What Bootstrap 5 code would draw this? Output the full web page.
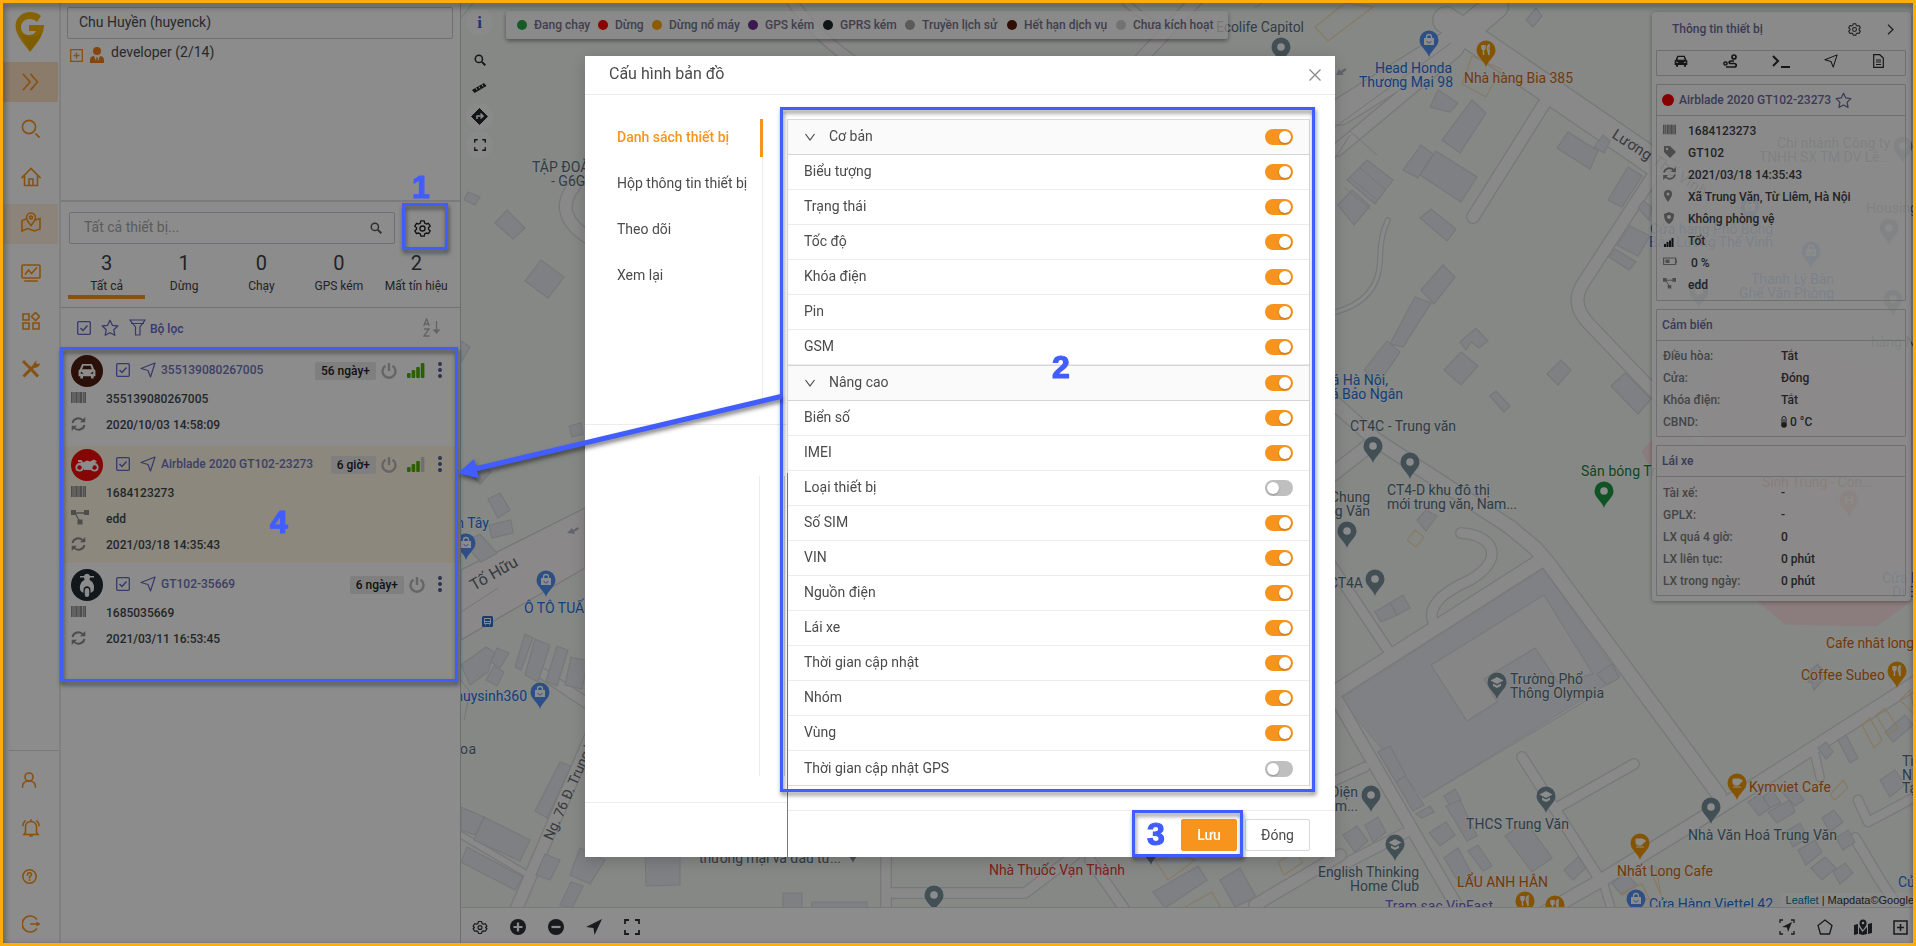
<!DOCTYPE html>
<html lang="vi">
<head>
<meta charset="utf-8">
<title>Cấu hình bản đồ</title>
<link href="https://cdn.jsdelivr.net/npm/bootstrap@5.3.0/dist/css/bootstrap.min.css" rel="stylesheet">
<style>
:root{--or:#f7941d;--ind:#6468c4;--mark-blue:#415dff}
body{font-family:Roboto,"Noto Sans",sans-serif;font-size:14px;color:#3c4247;height:946px;overflow:hidden;padding:3px;line-height:1.4}
svg{display:block;flex:none}
.ic{fill:none;stroke:currentColor;stroke-width:1.6;stroke-linecap:square}
.rail{width:58px;border-right:2px solid #e9e9e9;color:var(--or);flex:none}
.rail .cell{height:40px;margin-bottom:8px;width:55px;padding-left:1px}
.rail .up{padding-bottom:3px}
.rail .low{border-top:1px solid #dadada;margin-left:6px;padding-top:10px}
.rail .low .cell{margin-left:-6px;padding-bottom:2px}
.side{width:400px;border-right:1px solid #c8c8c8;flex:none}
.userbox{margin:4px 7px 0 6px;height:32px;border:1px solid #c9ccd1;border-radius:2px;padding:0 11px;color:#4a4d50}
.tree{height:163px;border-bottom:2px solid #e0e0e0;padding:4px 0 0 9px}
.find{width:326px;height:32px;border:1px solid #c9ccd6;border-radius:2px;color:#a6a8ab;padding:0 12px 0 14px}
.stat{width:77.4px;height:49px;font-size:12px;line-height:17px;white-space:nowrap}
.stat b{display:block;font-size:20px;font-weight:400;line-height:26px;height:28px}
.stat.on{border-bottom:4px solid var(--or)}
.tools{height:45px;border-top:1px solid #cfcfcf;color:var(--ind);padding:0 19px 5px 16px}
.dev{padding:3px 18px 5px 10px;margin-bottom:3px;font-size:12px;font-weight:500;color:#41474c}
.dev.sel{background:#fff7e6}
.dev .hd{height:31px;color:#6f73b9}
.dev .ava{width:32px;height:32px;border-radius:50%}
.dev .ln{height:26px}
.dev .ln svg{margin-right:20px;color:#8c8c8c}
.age{background:#e8e8e8;color:#222;border-radius:2px;height:18px;padding:0 6px;line-height:18px}
.mapzone{position:relative;overflow:hidden;background:#f4f8f5}
.mapzone>svg{position:absolute;left:0;top:0}
.ctl{position:absolute;left:5px;top:6px;color:#23272b}
.ctl div{width:27px;height:27px;border-radius:50%;background:#f9fbfa}
.legend{position:absolute;left:45px;top:8px;height:28px;width:722px;background:rgba(253,253,253,.75);border-radius:3px;box-shadow:0 2px 4px rgba(0,0,0,.4);font-size:12px;font-weight:500;color:#77728c;white-space:nowrap}
.legend i{width:10px;height:10px;border-radius:50%;flex:none}
.info{position:absolute;left:1191px;top:9px;width:259px;height:589px;background:rgba(253,253,253,.87);border-radius:4px;box-shadow:0 1px 4px rgba(0,0,0,.35);padding:0 5px 0 4px;font-size:12px;font-weight:500;color:#3c4146;white-space:nowrap}
.info .bx{border:1px solid #c8cccc;border-radius:1px}
.info .ti{color:#6a6b9f}
.info .hd2{height:31px;border-bottom:1px solid #c8cccc;padding-left:5px;color:#6a6b9f}
.info .rr{height:22px;padding-left:6px}
.info .rr svg{margin-right:11px;color:#8a8a8a}
.info .rr em{font-style:normal;color:#7d7f80;width:118px}
.credit{position:absolute;right:-6px;bottom:0;background:rgba(255,255,255,.6);font:11px/14px "Liberation Sans",Arial,sans-serif;padding:0 5px;color:#333}
.credit a{color:#0078a8;text-decoration:none}
.foot{height:36px;background:#fff;border-top:1px solid #ddd;color:#2c3136;padding:3px 5px 0 8px;z-index:1}
.dim{position:fixed;inset:0;background:rgba(0,0,0,.45);z-index:10}
.dlg{position:absolute;left:585px;top:56px;width:750px;height:801px;background:#fff;z-index:20;box-shadow:0 4px 14px rgba(0,0,0,.18);color:#4b4b4b}
.dlg header{height:39px;border-bottom:1px solid #ececec;padding:0 14px 1px 24px;font-size:16px}
.tabs4{width:178px;height:280px;border-right:1px solid #ececec;margin-top:24px}
.tabs4 div{height:38px;margin-bottom:8px;padding-left:32px;white-space:nowrap}
.tabs4 div.on{color:var(--or);border-right:3px solid var(--or);margin-right:-1px;font-weight:500}
.opts{width:523px;margin:24px 0 0 24px;border:1px solid #d9d9d9;flex:none;height:667px}
.opts .it{height:35px;border-bottom:1px solid #ececec;padding:0 16px}
.opts .it.grp{background:#fafafa;border-bottom-color:#d5d5d5}
.opts .it:last-child{border-bottom:0}
.tg{width:28px;height:16px;border-radius:8px;background:var(--or);padding:2px;display:flex;justify-content:flex-end}
.tg:after{content:"";width:12px;height:12px;border-radius:50%;background:#fff;box-shadow:0 1px 2px rgba(0,0,0,.25)}
.tg.off{background:#bfbfbf;justify-content:flex-start}
.dlg footer{position:absolute;left:203px;right:0;bottom:0;height:47px;border-top:1px solid #ececec;padding:8px 25px 0 0}
.dlg .btn{height:32px;border-radius:2px;font-size:14px;line-height:16px}
.save{background:var(--or)!important;color:#fff!important;border-color:var(--or)!important;font-weight:500;width:56px;margin-right:8px}
.shut{border-color:#d9d9d9!important;color:#4b4b4b!important;width:65px;padding:6px 0}
.seam{position:absolute;background:#ececec}
.callout{position:absolute;border:3px solid var(--mark-blue);z-index:30;filter:drop-shadow(1px 3px 2px rgba(0,0,0,.5))}
.num{position:absolute;z-index:31;font:bold 32px/32px "Liberation Sans",Arial,sans-serif;color:var(--mark-blue);-webkit-text-stroke:1.2px var(--mark-blue)}
.frame{position:fixed;inset:0;border:3px solid #fbae0a;z-index:40;filter:drop-shadow(1px 3px 3px rgba(0,0,0,.6));pointer-events:none}
</style>
</head>
<body>
<svg width="0" height="0" class="position-absolute"><defs>
<symbol id="gear" viewBox="0 0 20 20"><path class="ic" d="M8 2h4l.7 2.500 2 1.100 2.500-.6 2 3.400-1.800 1.600 1.800 1.600-2 3.400-2.500-.6-2 1.100L12 18H8l-.7-2.500-2-1.100-2.500.6-2-3.400L2.600 10 .8 8.400l2-3.400 2.500.6 2-1.100z" stroke-linejoin="round"/><circle class="ic" cx="10" cy="10" r="2.600"/></symbol>
<symbol id="cog" viewBox="0 0 20 20"><path class="ic" d="M8 1h4l.6 2.700 1.800 1 2.600-.8 2 3.400L17 9v2l2 1.700-2 3.400-2.600-.8-1.800 1L12 19H8l-.6-2.700-1.800-1-2.600.8-2-3.400L3 11V9L1 7.300l2-3.400 2.600.8 1.800-1z" stroke-linejoin="round"/><circle class="ic" cx="10" cy="10" r="3"/></symbol>
<symbol id="mag" viewBox="0 0 16 16"><circle cx="6.500" cy="6.500" r="4.800" fill="none" stroke="currentColor" stroke-width="2"/><path d="M10.500 10.500 15 15" stroke="currentColor" stroke-width="2.600"/></symbol>
<symbol id="chk" viewBox="0 0 14 14"><rect x=".7" y=".7" width="12.600" height="12.600" rx="1" fill="none" stroke="currentColor" stroke-width="1.300"/><path d="M3.500 7 6 9.500 10.500 4.500" fill="none" stroke="currentColor" stroke-width="1.500"/></symbol>
<symbol id="nav" viewBox="0 0 16 16"><path d="M15 1 10.500 15 8 8.500 1 6.500z" fill="none" stroke="currentColor" stroke-width="1.200" stroke-linejoin="round"/></symbol>
<symbol id="navf" viewBox="0 0 16 16"><path d="M16 0 8.500 16 7.500 9 0 8z" fill="currentColor"/></symbol>
<symbol id="bar" viewBox="0 0 15 11"><path d="M0 0h1.500v11H0zM2.500 0h1v11h-1zM4.500 0h2v11h-2zM7.500 0h1v11h-1zM9 0h2v11H9zM12 0h.8v11H12zM13.500 0H15v11h-1.500z" fill="currentColor"/><path d="M0 0h15v11H0z" fill="currentColor" opacity=".35"/></symbol>
<symbol id="syn" viewBox="0 0 14 14"><path d="M1 6a6 6 0 0 1 10.500-2.500M13 8A6 6 0 0 1 2.500 10.500" fill="none" stroke="currentColor" stroke-width="1.900"/><path d="M13.800 0v5.300H8.500zM.2 14V8.700h5.300z" fill="currentColor"/></symbol>
<symbol id="net" viewBox="0 0 18 15"><path d="M3 3h12M4 3l5 9" stroke="currentColor" stroke-width="1.300"/><path d="M0 0h5v5H0zM13 0h5v5h-5zM6.500 9.500h5v5h-5z" fill="currentColor"/></symbol>
<symbol id="pow" viewBox="0 0 16 16"><path d="M4.500 2.800a6.500 6.500 0 1 0 7 0M8 0v8" fill="none" stroke="currentColor" stroke-width="2.400"/></symbol>
<symbol id="star" viewBox="0 0 18 18"><path d="m9 1.300 2.400 5 5.400.7-4 3.800 1 5.500L9 13.700l-4.800 2.600 1-5.500-4-3.800 5.400-.7z" fill="none" stroke="currentColor" stroke-width="1.300" stroke-linejoin="round"/></symbol>
<symbol id="exp" viewBox="0 0 16 16"><path d="M1 5V1h4M11 1h4v4M15 11v4h-4M5 15H1v-4" fill="none" stroke="currentColor" stroke-width="1.800"/></symbol>
<symbol id="car" viewBox="0 0 20 18"><path fill-rule="evenodd" d="M4.500 1h11L18 7l1.500 1.500V15H17.500v2.500h-3V15h-9v2.500h-3V15H.5V8.500L2 7zM6 3 4.500 7h11L14 3zM3 9.500v2.500h3.500zM17 9.500v2.500h-3.500z" fill="currentColor"/></symbol>
<symbol id="chev" viewBox="0 0 10 8"><path d="M.5 1 5 7 9.500 1" fill="none" stroke="currentColor" stroke-width="1.200"/></symbol>
</defs></svg>

<div class="d-flex h-100">
 <nav class="rail d-flex flex-column">
  <div style="height:59px" class="ps-2 pt-1"><svg width="40" height="54" viewBox="0 0 40 54"><path d="M19 5C10 5 4.500 12 4.500 19c0 9 8 17 14.500 26 7-9 14-17 14-27H18v6h7c-1.500 3-4 4-7 4-5 0-8-3.500-8-8s4-8 8-8c4 0 6 1 8 3l4-6c-3-3-7-4-11-4z" fill="#f3b600"/><path d="M11 27c5 4 12 4 20-1-2 6-7 12-12 18-4-6-7-11-8-17z" fill="#e3aa00"/></svg></div>
  <div class="cell d-flex align-items-center justify-content-center" style="background:#fde0c4"><svg width="18" height="18" viewBox="0 0 18 18"><path class="ic" d="M1.500 1.500 8 9l-6.500 7.500M9 1.500 15.500 9 9 16.500"/></svg></div>
  <div class="cell up d-flex align-items-center justify-content-center"><svg width="20" height="20" viewBox="0 0 20 20"><circle class="ic" cx="8" cy="8" r="6.600" stroke-width="2"/><path class="ic" d="m15 15 3 3" stroke-width="2.400"/></svg></div>
  <div class="cell up d-flex align-items-center justify-content-center"><svg width="20" height="20" viewBox="0 0 20 20"><path class="ic" d="M1 10.500 10 1.500l9 9M3.500 9v9.500h13V9M8 18v-6h4v6" stroke-width="1.400"/></svg></div>
  <div class="cell d-flex align-items-center justify-content-center pb-1" style="background:#fff1de;position:relative;top:-2px"><svg width="20" height="20" viewBox="0 0 20 20"><path class="ic" d="M5 7 1 8.500V19l5.500-2.500 7 2.500L19 17V6.500l-4 1.300M10 13.500C7 10 5.500 8 5.500 5.500a4.500 4.500 0 0 1 9 0C14.500 8 13 10 10 13.500z" stroke-width="1.300"/><circle class="ic" cx="10" cy="5.500" r="1.500" stroke-width="1.200"/></svg></div>
  <div class="cell up d-flex align-items-center justify-content-center"><svg width="20" height="18" viewBox="0 0 20 18"><rect class="ic" x="1" y="1" width="18" height="13" rx="1" stroke-width="1.400"/><path class="ic" d="m4.500 10 3-4 3 3.500 5-5.500M4 17h12" stroke-width="1.300"/></svg></div>
  <div class="cell up d-flex align-items-center justify-content-center"><svg width="18" height="18" viewBox="0 0 18 18"><path class="ic" d="M1 2h6v6H1zM1 11h6v6H1zM11 11h6v6h-6zM13.500 0.500 17.500 4.500 13.500 8.500 9.500 4.500z" stroke-width="1.400"/></svg></div>
  <div class="cell up d-flex align-items-center justify-content-center"><svg width="20" height="20" viewBox="0 0 20 20"><path d="M2.500 17.500 13 7M7 7l10 10.500" stroke="currentColor" stroke-width="3"/><path d="M1 3l2-2 5 5-2 2zM12 5.500 15.500 1l-.5 3.500 3.500.5L19 3c1 3-3 7-6.500 5.500z" fill="currentColor"/></svg></div>
  <div class="low mt-auto" style="height:193px">
   <div class="cell d-flex align-items-center justify-content-center pe-1"><svg width="16" height="16" viewBox="0 0 16 16"><circle class="ic" cx="8" cy="5" r="4" stroke-width="1.500"/><path class="ic" d="M1.500 15c0-4 2.500-6 6.500-6s6.500 2 6.500 6" stroke-width="1.500"/></svg></div>
   <div class="cell d-flex align-items-center justify-content-center"><svg width="18" height="18" viewBox="0 0 18 18"><path class="ic" d="M2 15.500h14l-1.500-2V8c0-3-2-5.500-5.500-5.500S3.500 5 3.500 8v5.500zM1 6.500C1 4 2 3 3 2M17 6.500C17 4 16 3 15 2M9 1v1M8 17h2" stroke-width="1.100"/></svg></div>
   <div class="cell d-flex align-items-center justify-content-center pe-1"><svg width="15" height="15" viewBox="0 0 15 15"><circle class="ic" cx="7.500" cy="7.500" r="6.700" stroke-width="1.300"/><path class="ic" d="M5.500 6c0-3 4-3 4-.3 0 1.500-2 1.500-2 3M7.500 11v.2" stroke-width="1.200"/></svg></div>
   <div class="cell d-flex align-items-center justify-content-center"><svg width="18" height="18" viewBox="0 0 18 18"><path class="ic" d="M14.500 4a8 8 0 1 0 0 10M9 9h8" stroke-width="1.500"/><path d="M14.500 6.300 18 9l-3.500 2.700z" fill="currentColor"/></svg></div>
  </div>
 </nav>

 <section class="side">
  <div class="userbox d-flex align-items-center">Chu Huyền (huyenck)</div>
  <div class="tree"><div class="d-flex align-items-center" style="color:#4a4d50"><svg width="13" height="13" viewBox="0 0 13 13" class="mt-1"><path d="M.7.700h11.600v11.600H.7zM3.500 6.500h6M6.500 3.500v6" fill="none" stroke="#f7941d" stroke-width="1.300"/></svg>
   <svg width="14" height="16" viewBox="0 0 14 16" class="mt-1" style="margin:0 7px"><circle cx="7" cy="4" r="4" fill="#f0801a"/><path d="M0 16v-3c0-3 2-4 4-4l2 5 .5-4h1l.5 4 2-5c2 0 4 1 4 4v3z" fill="#f0801a"/></svg>developer (2/14)</div></div>
  <div class="d-flex align-items-center" style="padding:10px 0 0 8px">
   <div class="find d-flex align-items-center justify-content-between">Tất cả thiết bị...<svg width="12" height="12" style="color:#555"><use href="#mag"/></svg></div>
   <svg width="17" height="17" style="color:#222;margin-left:19px"><use href="#cog"/></svg>
  </div>
  <div class="d-flex text-center" style="padding:6px 0 8px 7px">
   <div class="stat on"><b>3</b>Tất cả</div><div class="stat"><b>1</b>Dừng</div><div class="stat"><b>0</b>Chạy</div><div class="stat"><b>0</b>GPS kém</div><div class="stat"><b>2</b>Mất tín hiệu</div>
  </div>
  <div class="tools d-flex align-items-center"><svg width="14" height="14"><use href="#chk"/></svg><svg width="18" height="18" style="margin-left:10px"><use href="#star"/></svg><svg width="17" height="17" viewBox="0 0 17 17" style="margin-left:10px"><path d="M1 1h15l-5 7v8H6.500V8zM2 4.500h13" fill="none" stroke="currentColor" stroke-width="1.200"/></svg><span style="font-size:12px;font-weight:500;margin:4px 0 0 4px">Bộ lọc</span>
   <svg class="ms-auto" width="18" height="19" viewBox="0 0 18 19"><path d="M.7 8 3.500.8 6.300 8M1.500 6h4M1 11h5L1 18h5.500M13.500 3v12" fill="none" stroke="#b5b5b5" stroke-width="1.300"/><path d="M9.500 11.500h8l-4 4.500z" fill="#b5b5b5"/></svg></div>
  <div id="devices"></div>
 </section>

 <main class="flex-grow-1 d-flex flex-column" style="min-width:0">
  <div class="mapzone flex-grow-1">
   <svg id="map" width="1452" height="905" viewBox="461 3 1452 905" font-family="Roboto,Noto Sans,sans-serif" font-size="14"></svg>
   <div class="ctl"><div class="d-flex align-items-center justify-content-center" style="color:#4e52d8;font:bold 17px 'Liberation Serif','DejaVu Serif',serif">i</div>
    <div class="d-flex align-items-center justify-content-center" style="margin-top:10px;background:none"><svg width="12" height="12"><use href="#mag"/></svg></div>
    <div class="d-flex align-items-center justify-content-center" style="margin-top:1px;background:none"><svg width="15" height="12" viewBox="0 0 15 12"><path d="m0 8 12-7 2.500 3-12 7z" fill="currentColor"/><path d="m4 6 1 2M7 4.500l1 2M10 2.500l1 2" stroke="#f4f8f5"/></svg></div>
    <div class="d-flex align-items-center justify-content-center" style="margin-top:2px"><svg width="17" height="17" viewBox="0 0 17 17"><path d="m8.500.5 8 8-8 8-8-8z" fill="currentColor" stroke="currentColor" stroke-linejoin="round"/><path d="M6 11V8h5M9.500 5.500 12 8l-2.500 2.500" fill="none" stroke="#fff" stroke-width="1.500"/></svg></div>
    <div class="d-flex align-items-center justify-content-center" style="margin-top:1px"><svg width="12" height="12"><use href="#exp"/></svg></div></div>
   <div class="legend" id="legend"></div>
   <aside class="info">
    <div class="d-flex align-items-center ti" style="height:34px;padding:0 12px 0 16px">Thông tin thiết bị<svg class="ms-auto" width="13" height="13" style="color:#333"><use href="#cog"/></svg><svg width="7" height="11" viewBox="0 0 7 11" style="margin-left:26px"><path d="m1 .8 5 4.700-5 4.700" fill="none" stroke="#333" stroke-width="1.200"/></svg></div>
    <div class="bx d-flex justify-content-around align-items-center pb-1 pe-1" style="height:26px;margin-top:4px;color:#26292c">
     <svg width="14" height="12"><use href="#car"/></svg>
     <svg width="15" height="14" viewBox="0 0 15 14"><circle cx="11" cy="3" r="2" fill="none" stroke="currentColor" stroke-width="1.700"/><circle cx="2.500" cy="9.500" r="1.600" fill="none" stroke="currentColor" stroke-width="1.500"/><path d="M11 7H8c-2.500 0-2.500 2.500 0 2.500h3c3 0 3 3.500 0 3.500H3" fill="none" stroke="currentColor" stroke-width="1.700"/></svg>
     <svg width="18" height="13" viewBox="0 0 18 13"><path d="m1 1 5 5-5 5M9 12h9" fill="none" stroke="currentColor" stroke-width="2"/></svg>
     <svg width="14" height="14"><use href="#nav"/></svg>
     <svg width="11" height="14" viewBox="0 0 11 14"><path d="M.7.700h6L10.300 4v9.300H.7zM3 6h5M3 8h5M3 10.500h5" fill="none" stroke="currentColor" stroke-width="1.200"/></svg></div>
    <div class="bx" style="height:217px;margin-top:8px"><div class="hd2 d-flex align-items-center" style="margin-bottom:4px"><i style="width:12px;height:12px;border-radius:50%;background:#f50000;margin-right:5px"></i>Airblade 2020 GT102-23273<svg width="17" height="17" style="margin-left:4px"><use href="#star"/></svg></div><div id="facts"></div></div>
    <div class="bx" style="height:128px;margin-top:8px"><div class="hd2 d-flex align-items-center" style="margin-bottom:4px">Cảm biến</div>
     <div class="rr d-flex align-items-center"><em>Điều hòa:</em>Tắt</div><div class="rr d-flex align-items-center"><em>Cửa:</em>Đóng</div><div class="rr d-flex align-items-center"><em>Khóa điện:</em>Tắt</div><div class="rr d-flex align-items-center"><em>CBND:</em><svg width="6" height="12" viewBox="0 0 6 12" style="margin-right:3px"><rect x="1" y=".5" width="4" height="9" rx="2" fill="#fff" stroke="#333"/><circle cx="3" cy="9" r="2.800" fill="#333"/><path d="M3 3v6" stroke="#333"/></svg>0 °C</div></div>
    <div class="bx" style="height:151px;margin-top:8px"><div class="hd2 d-flex align-items-center" style="margin-bottom:5px">Lái xe</div>
     <div class="rr d-flex align-items-center"><em>Tài xế:</em>-</div><div class="rr d-flex align-items-center"><em>GPLX:</em>-</div><div class="rr d-flex align-items-center"><em>LX quá 4 giờ:</em>0</div><div class="rr d-flex align-items-center"><em>LX liên tục:</em>0 phút</div><div class="rr d-flex align-items-center"><em>LX trong ngày:</em>0 phút</div></div>
   </aside>
   <div class="credit"><a href="#">Leaflet</a> | Mapdata©Google</div>
  </div>
  <div class="foot d-flex align-items-center">
   <svg width="22" height="15"><use href="#gear" width="22"/></svg>
   <svg width="16" height="16" viewBox="0 0 16 16" style="margin-left:19px"><circle cx="8" cy="8" r="8" fill="currentColor"/><path d="M8 3.500v9M3.500 8h9" stroke="#fff" stroke-width="2.200"/></svg>
   <svg width="16" height="16" viewBox="0 0 16 16" style="margin-left:22px"><circle cx="8" cy="8" r="8" fill="currentColor"/><path d="M3.500 8h9" stroke="#fff" stroke-width="2.200"/></svg>
   <svg width="16" height="16" style="margin-left:22px"><use href="#navf"/></svg>
   <svg width="16" height="16" style="margin-left:22px"><use href="#exp"/></svg>
   <svg class="ms-auto" width="16" height="16" viewBox="0 0 16 16"><path d="M1 4V1h3M12 1h3v3M15 12v3h-3M4 15H1v-3" fill="none" stroke="currentColor" stroke-width="1.300"/><path d="M13 3 9 13 8 8.500 3 8z" fill="currentColor"/></svg>
   <svg width="16" height="16" viewBox="0 0 16 16" style="margin-left:22px"><path d="m8 1 7 5.500L12.500 15h-9L1 6.500z" fill="none" stroke="currentColor" stroke-width="1.300"/></svg>
   <svg width="18" height="16" viewBox="0 0 18 16" style="margin-left:21px"><path fill-rule="evenodd" d="M0 6l4-1v10l-4 1zM5 8l3.500 5L13 8v7l-4 1-4-1zM14 5l4-1v10l-4 1zM9 11C6 7 5.500 6 5.500 4a3.500 3.500 0 0 1 7 0c0 2-.5 3-3.500 7zM9 2.700a1.300 1.300 0 1 0 0 2.600 1.300 1.300 0 0 0 0-2.600z" fill="currentColor"/></svg>
   <svg width="15" height="15" viewBox="0 0 15 15" style="margin:0 0 0 21px"><path d="M1 1h13v13H1zM4 7.500h7M7.500 4v7" fill="none" stroke="currentColor" stroke-width="1.500"/></svg>
  </div>
 </main>
</div>

<div class="dim"></div>

<div class="dlg" role="dialog">
 <header class="d-flex align-items-center justify-content-between">Cấu hình bản đồ<svg width="12" height="12" viewBox="0 0 12 12"><path d="M.5.500l11 11M11.500.500l-11 11" stroke="#8a8a8a" stroke-width="1.300"/></svg></header>
 <div class="d-flex">
  <div class="tabs4"><div class="on d-flex align-items-center">Danh sách thiết bị</div><div class="d-flex align-items-center">Hộp thông tin thiết bị</div><div class="d-flex align-items-center">Theo dõi</div><div class="d-flex align-items-center">Xem lại</div></div>
  <div class="opts" id="opts"></div>
 </div>
 <i class="seam" style="left:0;top:368px;width:202px;height:1px"></i>
 <i class="seam" style="left:0;top:746px;width:202px;height:1px"></i>
 <i class="seam" style="left:174px;top:420px;width:1px;height:300px"></i>
 <i class="seam" style="left:199px;top:420px;width:1px;height:300px;background:#d5d5d5"></i>
 <i class="seam" style="left:202px;top:417px;width:1px;height:384px;background:#777"></i>
 <footer class="d-flex justify-content-end"><button class="btn save">Lưu</button><button class="btn shut">Đóng</button></footer>
</div>

<div class="callout" style="left:402px;top:203px;width:46px;height:47px"></div>
<div class="callout" style="left:60px;top:347px;width:398px;height:335px"></div>
<div class="callout" style="left:780px;top:107px;width:535px;height:685px"></div>
<div class="callout" style="left:1132px;top:810px;width:111px;height:47px"></div>
<svg width="340" height="100" viewBox="450 390 340 100" style="position:absolute;left:450px;top:390px;z-index:30;filter:drop-shadow(1px 3px 2px rgba(0,0,0,.5))"><path d="M781 396.500 475 469" stroke="#415dff" stroke-width="5"/><path d="m458 473 16-14 5 19.500z" fill="#415dff"/></svg>
<div class="num" style="left:412px;top:171px">1</div><div class="num" style="left:1052px;top:351px">2</div><div class="num" style="left:1147px;top:818px">3</div><div class="num" style="left:270px;top:506px">4</div>
<div class="frame"></div>

<script src="https://cdn.jsdelivr.net/npm/bootstrap@5.3.0/dist/js/bootstrap.bundle.min.js"></script>
<script>
const $ = id => document.getElementById(id);
const use = (n, w, h, s = '') => `<svg width="${w}" height="${h}" style="${s}"><use href="#${n}"/></svg>`;

// settings list
$('opts').innerHTML = ['*Cơ bản','Biểu tượng','Trạng thái','Tốc độ','Khóa điện','Pin','GSM','*Nâng cao','Biển số','IMEI','-Loại thiết bị','Số SIM','VIN','Nguồn điện','Lái xe','Thời gian cập nhật','Nhóm','Vùng','-Thời gian cập nhật GPS'].map((t, i) => {
  const g = t[0] === '*', off = t[0] === '-';
  return `<div class="it d-flex align-items-center ${g ? 'grp' : ''}" ${i === 7 ? 'style="height:36px;border-top:1px solid #d5d5d5"' : ''}>${g ? use('chev', 10, 8, 'margin:0 14px 0 1px') : ''}<span>${t.replace(/^[*-]/, '')}</span><i class="tg ms-auto ${off ? 'off' : ''}"></i></div>`;
}).join('');

// device cards
const glyph = {
  car: '<use href="#car" x="7" y="8" width="18" height="16" color="#fff"/>',
  moto: '<g fill="none" stroke="#fff" stroke-width="1.800"><circle cx="8.500" cy="18.500" r="3.200"/><circle cx="23.500" cy="18.500" r="3.200"/><path d="M7 12h3l2 3"/></g><path d="M6 14l6-.5 4-2 3 1 4-2 3 2-2 1.500 2.500 1-4 1-2.500 5h-7l-2-4z" fill="#fff"/>',
  vespa: '<path fill-rule="evenodd" d="M9 7h4c1-3 5-3 6 0h4v1.500h-4l-.5 2.500c4 2 5.500 6 4 11l-3 2v-3c0-5-7-5-7 0v3l-3-2c-1.500-5 0-9 4-11L13 8.500H9z" fill="#fff"/><rect x="13.800" y="19" width="4.400" height="9" rx="2.200" fill="#fff"/>'};
const sig = n => `<svg width="18" height="15" viewBox="0 0 18 15" style="margin-left:10px">${[5,8,11,15].map((h, i) => `<rect x="${i*4.6}" y="${15-h}" width="3.600" height="${h}" rx="1" fill="${i < n ? '#4fae00' : '#ccc'}"/>`).join('')}</svg>`;
$('devices').innerHTML = [
  ['car','#4d1e10','355139080267005','56 ngày+',4,[['bar','355139080267005'],['syn','2020/10/03 14:58:09']]],
  ['moto','#f50a0a','Airblade 2020 GT102-23273','6 giờ+',3,[['bar','1684123273'],['net','edd'],['syn','2021/03/18 14:35:43']],1],
  ['vespa','#1f2a31','GT102-35669','6 ngày+',0,[['bar','1685035669'],['syn','2021/03/11 16:53:45']]]
].map(([k, c, n, a, s, ls, sel]) => `<div class="dev ${sel ? 'sel' : ''}"><div class="hd d-flex align-items-center"><svg class="ava" viewBox="0 0 32 32" style="background:${c};margin-bottom:-1px">${glyph[k]}</svg>${use('chk',14,14,'margin:0 0 2px 13px;color:#6468c4')}${use('nav',16,16,'margin:0 5px 2px 10px;color:#6468c4')}${n}<span class="age ms-auto">${a}</span>${use('pow',16,16,'margin-left:5px;color:#b9b9b9')}${s ? sig(s) : ''}<svg width="4" height="16" viewBox="0 0 4 16" style="margin:0 0 2px 13px"><path d="M2 2v.01M2 8v.01M2 14v.01" stroke="#555b92" stroke-width="4" stroke-linecap="round"/></svg></div>${ls.map(([i, t]) => `<div class="ln d-flex align-items-center">${i === 'net' ? use(i,18,15,'margin:0 17px 3px 0') : use(i,15,i === 'bar' ? 11 : 14,'margin-bottom:3px')}${t}</div>`).join('')}</div>`).join('');

// status legend: dot centre, label
$('legend').innerHTML = [[16,'Đang chạy','#28a745'],[97,'Dừng','#ff0000'],[151,'Dừng nổ máy','#ffa500'],[247,'GPS kém','#6f2c91'],[322,'GPRS kém','#1d2529'],[404,'Truyền lịch sử','#a5a5a5'],[506,'Hết hạn dịch vụ','#5a1a0a'],[615,'Chưa kích hoạt','#cfcfcf']]
 .map(([x, t, c]) => `<div class="position-absolute d-flex align-items-center h-100" style="left:${x-5}px"><i style="background:${c};margin-right:7px"></i>${t}</div>`).join('');

// device facts
const small = {
  tag: '<path d="M1 1h6l6 6-6 6-6-6z" fill="currentColor"/><circle cx="4" cy="4" r="1.200" fill="#fff"/>',
  pin: '<path fill-rule="evenodd" d="M5 13C2 8.500 1 7 1 5a4 4 0 0 1 8 0c0 2-1 3.500-4 8zM5 3.500a1.500 1.500 0 1 0 0 3 1.500 1.500 0 0 0 0-3z" fill="currentColor"/>',
  shd: '<path fill-rule="evenodd" d="m6 1 5 2c0 5-1.500 8-5 10C2.500 11 1 8 1 3zM6 4a2 2 0 1 0 0 4 2 2 0 0 0 0-4z" fill="currentColor"/>',
  gsm: '<path d="M1 11h2v3H1zM3.500 9h2v5h-2zM6 7.500h2V14H6zM8.500 5h2v9h-2z" fill="#222"/>',
  bat: '<path d="M.6 3h12v6.500H.6zM13 5h1v2.500h-1" fill="none" stroke="currentColor" stroke-width="1.200"/><path d="M2.500 4.500h4V8h-4z" fill="currentColor"/>'};
$('facts').innerHTML = [['bar','1684123273'],['tag','GT102'],['syn','2021/03/18 14:35:43'],['pin','Xã Trung Văn, Từ Liêm, Hà Nội'],['shd','Không phòng vệ'],['gsm','Tốt'],['bat','&nbsp;0 %'],['net','edd']]
 .map(([k, t]) => `<div class="rr d-flex align-items-center"><svg width="14" height="14" viewBox="0 0 14 14" style="margin-bottom:2px">${small[k] || `<use href="#${k}" width="13" height="13"/>`}</svg>${t}</div>`).join('');

// ---- map ----
let m = '';
const poly = (pts, f, s) => m += `<polygon points="${pts}" fill="${f}" stroke="${s}" stroke-width="1.200"/>`;
// casings first, surfaces second, so that junctions join up
const roads = list => {
  const ways = list.map(r => r.split('|'));
  [['#d9dadc', 0], ['#fcf9f9', 2.6]].forEach(([c, less]) => ways.forEach(([d, w]) => m += `<path d="${d}" fill="none" stroke="${c}" stroke-width="${w - less}" stroke-linejoin="round" stroke-linecap="round"/>`));
};
poly('1340,699 1543,569 1620,676 1423,798','#e9ebf1','#e2e4e8');
poly('1431,665 1544,595 1593,674 1558,682 1535,648 1484,679 1497,702 1467,721','#f2f5f3','#d9dbe0');
poly('1642,451 1760,335 1912,380 1912,600 1876,626 1785,624 1757,600 1652,470','#fde3e3','#fde3e3');
poly('461,570 461,640 585,568 585,508','#fbf8f7','#d5d6d9');
roads(['M1340,112 1455,40 1495,6|28','M1337,150 1457,50|14','M1446,20 1505,60 1680,180|28','M1544,104 1473,217|14','M1660,165 1582,285Q1570,305 1590,325L1700,440|14','M1388,220Q1380,235 1380,262Q1378,300 1336,312|6','M1325,395 1376,440 1510,527 1535,548 1549,564 1719,795|16','M1325,480 1370,445|16','M1461,533C1495,535 1505,560 1470,580Q1425,600 1433,622|12','M1540,561 1335,692|16','M1328,560 1388,650|12','M1337,700 1459,910|14','M1330,783 1365,767|11','M1335,869 1405,833|12','M1522,757 1600,880|12','M1634,764 1560,806|12','M1535,918 1600,881 1722,806 1835,734 1915,683|15','M1604,885 1612,912|10','M1855,838 1880,880 1900,910|12','M1761,805 1755,802|4','M1815,755 1820,777|10','M1763,805 1758,802|3','M1763,800 1760,798|3','M1858,800 1868,822 1913,798|11']);
roads(['M791,0Q815,35 854,62|12','M1140,60 1196,0|14','M1126,3 1150,22|8','M540,672 600,712|12','M600,715 515,912|14','M461,835 525,873|8','M575,185Q550,215 592,240|14','M886,855 886,910|12','M893,893 1025,893 1075,855|12','M1090,860 1125,910|12','M1255,905 1340,855|14']);
m += '<path d="M461,612 498,588M461,18 473,3M461,680 470,692 464,720M1262,3 1255,8M1335,127 1451,43" fill="none" stroke="#d5d6d9"/>';
// buildings
['464,200 468,192 480,197 475,205','495,223 507,210 525,228 513,239','525,281 541,260 564,277 548,298','461,341 470,347 461,362','569,426 581,423 583,434 572,437','470,474 483,465 491,472 480,484','488,499 500,493 510,510 498,518','489,525 511,520 513,533 492,538','463,543 480,534 497,553 481,562','525,634 533,638 521,670 515,667','535,639 550,645 538,682 525,675','557,646 568,650 557,686 546,681','571,657 588,661 582,689 565,685','486,647 494,652 488,672 470,685 461,665','497,648 509,653 500,668 491,662','494,666 504,672 497,686 486,680','560,762 571,766 547,818 535,811','484,817 530,840 520,861 474,840','461,807 484,817 475,835 461,830','467,847 523,877 515,890 461,862','545,854 560,860 550,880 536,875','580,848 605,860 590,884 570,875','571,882 583,886 572,908 560,905','645,850 680,850 680,885 646,886','783,893 802,893 802,910 783,910','812,902 867,902 867,912 812,912','1153,892 1198,866 1207,880 1165,908','1220,880 1240,868 1256,897 1235,907',
'1430,107 1438,90 1458,103 1450,112','1442,140 1472,100 1486,113 1460,153','1420,175 1436,151 1477,177 1461,202','1403,170 1421,145 1433,154 1418,178','1420,218 1431,209 1456,229 1447,241','1421,290 1443,265 1455,277 1434,304','1557,148 1568,132 1598,151 1590,169','1594,147 1603,135 1610,141 1604,153','1608,200 1628,167 1642,176 1622,207','1638,208 1643,201 1652,207 1649,220','1617,245 1630,226 1650,236 1638,256','1609,257 1615,249 1636,262 1629,270','1526,20 1536,8 1542,16 1533,27','1390,344 1415,297 1431,303 1403,347','1364,370 1387,341 1400,352 1378,384','1460,342 1476,328 1488,341 1479,348 1471,342 1466,350','1444,370 1461,352 1478,366 1461,385','1547,374 1561,360 1571,370 1558,385','1611,386 1625,373 1651,399 1638,414','1490,396 1496,391 1510,406 1504,412','1417,520 1426,510 1437,516 1426,531','1347,180 1367,160 1393,180 1375,204','1338,205 1352,190 1370,206 1354,225','1375,612 1390,603 1397,615 1381,622','1390,603 1403,595 1410,608 1397,615','1378,752 1390,746 1406,776 1396,782','1396,782 1405,776 1424,805 1413,811','1416,814 1430,806 1434,812 1422,818','1444,796 1455,789 1461,800 1451,807','1429,833 1446,822 1455,835 1440,846','1446,806 1460,800 1477,836 1467,841','1505,836 1526,822 1552,858 1532,872','1444,858 1458,848 1475,880 1460,884','1468,851 1478,845 1492,866 1483,871','1564,870 1578,857 1586,868 1573,880','1597,674 1612,664 1619,678 1607,685','1612,884 1625,872 1637,885 1622,895','1343,835 1357,826 1368,841 1355,852','1365,825 1378,817 1386,832 1373,842','1818,748 1826,742 1833,752 1826,759','1838,740 1846,735 1858,758 1850,763','1748,802 1760,794 1770,808 1759,816','1763,797 1772,790 1781,803 1770,808','1768,812 1790,800 1795,812 1777,823','1782,792 1792,785 1804,800 1795,806','1785,832 1800,823 1808,838 1793,847','1798,850 1815,840 1822,852 1806,865','1811,868 1825,857 1836,868 1822,880','1833,872 1845,863 1853,873 1840,884','1880,780 1895,770 1905,785 1890,797','1885,732 1905,715 1913,725 1893,742','1808,682 1817,665 1825,670 1819,684','1809,672 1818,664 1823,680 1814,690','1822,818 1834,810 1843,822 1830,832','1836,838 1848,830 1855,842 1843,850'].forEach(p => poly(p, '#e8eaef', '#d7d9de'));
m += '<path d="M1360,168l26,22M1351,178l26,22M1345,188l26,22M1350,131l27,24M1350,135l-18,28M1423,798 1597,694" fill="none" stroke="#d5d7dc"/>';
['1315,27 1345,3 1373,7 1328,41','1462,84 1472,56 1501,69 1486,97','1407,540 1415,530 1424,537 1416,547','1862,725 1870,718 1882,740 1874,748','1876,715 1885,708 1898,728 1888,735','1900,700 1910,690 1915,715','1830,795 1843,780 1848,788 1835,800','1155,860 1178,855 1195,860 1168,880','1180,910 1212,892 1222,910','1621,893 1642,884 1650,900','1649,867 1656,867 1661,895','1278,862 1296,852 1303,862 1284,875'].forEach(p => poly(p, 'none', '#f6dfae'));

const C = {g:['#56707d','#78909c'], b:['#1f74e0','#5491f5'], o:['#d0690c','#f29900'], n:['#188038','#1e9a46'], r:['#e03c32','#f28b82'], v:['#6a68c4','#6a68c4']};
const pin = (x, y, k, t) => { m += `<path transform="translate(${x} ${y})" d="M0,17C-2,10-9.500,7-9.500,0a9.500,9.500 0 0 1 19,0C9.500,7 2,10 0,17z" fill="${C[k][1]}"/>` +
 `<g transform="translate(${x} ${y})" fill="#fff" stroke="#fff">${{d:'<circle r="3.800" stroke="none"/>', s:'<path d="M-5-2H5V5H-5z" stroke="none"/><path d="M-2.500-2v-1a2.500 2.500 0 0 1 5 0v1" fill="none" stroke-width="1.300"/><path d="M-2 1c0 2.500 4 2.500 4 0" fill="none" stroke="#5491f5"/>', f:'<path d="M-4-5v3c0 2 3 2 3 0v-3M-2.500-5V5M3 5V-5c-2 1-2 4-1 6z" stroke-width="1.400" fill="none"/>', c:'<path d="M-4-4h7v4c0 3-7 3-7 0zM3-3h2v2H3M-4 4h8" stroke-width="1"/>', e:'<path d="M0-5 6.500-1.500 0 2-6.500-1.500zM-4 1.500v2.500L0 6 4 4V1.500L0 3.500z" stroke="none"/>', h:'<path d="M-3-4V4M3-4V4M-3 0H3" stroke-width="1.800"/>'}[t]}</g>`; };
const lab = (x, y, w, s, k, end) => m += `<text x="${x}" y="${y}" ${w ? `textLength="${w}"` : ''} ${end ? 'text-anchor="end"' : ''} fill="${C[k][0]}" stroke="#fff" stroke-opacity=".55" stroke-width="2" paint-order="stroke">${s}</text>`;
[[1281,47,'g','d'],[1429,40,'b','s'],[1486,50,'o','f'],[466,543,'b','s'],[546,580,'b','s'],[540,692,'b','s'],[1373,446,'g','d'],[1410,462,'g','d'],[1347,531,'g','d'],[1375,579,'g','d'],[1604,491,'n','d'],[1903,146,'g','d'],[1889,228,'g','d'],[1750,206,'b','s'],[1811,251,'b','s'],[1893,299,'g','d'],[1699,291,'g','d'],[1849,500,'r','h'],[1497,682,'g','e'],[1546,796,'g','e'],[1395,844,'g','e'],[1525,901,'o','f'],[1555,905,'o','f'],[1640,843,'o','c'],[1737,783,'o','c'],[1711,807,'g','d'],[1636,899,'b','s'],[1897,671,'o','f'],[1371,795,'g','d'],[934,895,'g','d'],[1151,848,'g','d'],[853,846,'g','d']].forEach(p => pin(...p));
[[1216,32,88,'Ecolife Capitol','g'],[1375,73,77,'Head Honda','b'],[1359,87,94,'Thương Mại 98','b'],[1464,83,109,'Nhà hàng Bia 385','o'],[532,172,0,'TẬP ĐOÀN','g'],[551,186,0,'- G6GROUP','g'],[489,528,0,'n Tây','b',1],[524,613,0,'Ô TÔ TUẤN','b'],[527,701,0,'huysinh360','b',1],[460,754,16,'oa','g'],[1388,385,0,'Đá Hà Nội,','b',1],[1403,399,0,'đá Bảo Ngân','b',1],[1350,431,106,'CT4C - Trung văn','g'],[1387,495,103,'CT4-D khu đô thị','g'],[1387,509,130,'mới trung văn, Nam...','g'],[1370,502,0,'Chung','g',1],[1370,516,0,'ng Văn','g',1],[1363,588,0,'CT4A','g',1],[1581,476,75,'Sân bóng Tr','n'],[1777,148,113,'Chi nhánh Công ty','g'],[1759,162,131,'TNHH SX TM DV Lê...','g'],[1866,213,0,'Housing','g'],[1650,234,123,'Cửa hàng Phố Bông','b'],[1649,247,124,'Bàn Lương Thế Vinh','b'],[1751,284,83,'Thanh Lý Bàn','b'],[1739,298,95,'Ghế Văn Phòng','b'],[1871,347,0,'hàng N','g'],[1762,487,111,'Sinh Trung - Con...','r'],[1882,583,0,'Cửa B','b'],[1892,597,0,'Di B','b'],[1510,684,73,'Trường Phổ','g'],[1510,698,94,'Thông Olympia','g'],[1466,829,103,'THCS Trung Văn','g'],[1318,877,101,'English Thinking','g'],[1350,891,69,'Home Club','g'],[1457,887,91,'LẨU ANH HÂN','o'],[1385,911,108,'Trạm sạc VinFast','v'],[1617,876,96,'Nhất Long Cafe','o'],[1749,792,82,'Kymviet Cafe','o'],[1688,840,149,'Nhà Văn Hoá Trung Văn','g'],[1649,909,124,'Cửa Hàng Viettel 42','b'],[1826,648,88,'Cafe nhât long','o'],[1801,680,84,'Coffee Subeo','o'],[1902,766,0,'Tì','g'],[1902,780,0,'Nh','g'],[1902,793,0,'Tạ','g'],[1898,887,0,'Cử','b'],[1358,797,0,'Điện','g',1],[1358,811,0,'m...','g',1],[989,875,136,'Nhà Thuốc Vạn Thành','r'],[699,863,142,'thương mại và đầu tư...','g']].forEach(l => lab(...l));
m += '<g fill="#5f6b70"><text transform="translate(474 591) rotate(-30)" font-size="16" textLength="52">Tố Hữu</text><text transform="translate(552 841) rotate(-66)" font-size="14">Ng. 76 Đ. Trung Văn</text><text transform="translate(1611 137) rotate(33)" font-size="15" letter-spacing=".4">Lương Thế Vinh</text></g>';
m += '<rect x="482" y="616" width="11" height="11" rx="1.500" fill="#2a6fd0"/><path d="M484.500 618.500h6v5h-6zM485 625h1M489 625h1M484.500 621.500h6" fill="none" stroke="#fff"/>';
m += '<g fill="#b3b6c3"><path d="m567 533 5-5 1 2 5-3 1 2-5 3 1 2zM1336 75l3-6 1.500 2 5-3 1 2-4 3 1 2z"/></g>';
$('map').innerHTML = m;
</script>
</body>
</html>
